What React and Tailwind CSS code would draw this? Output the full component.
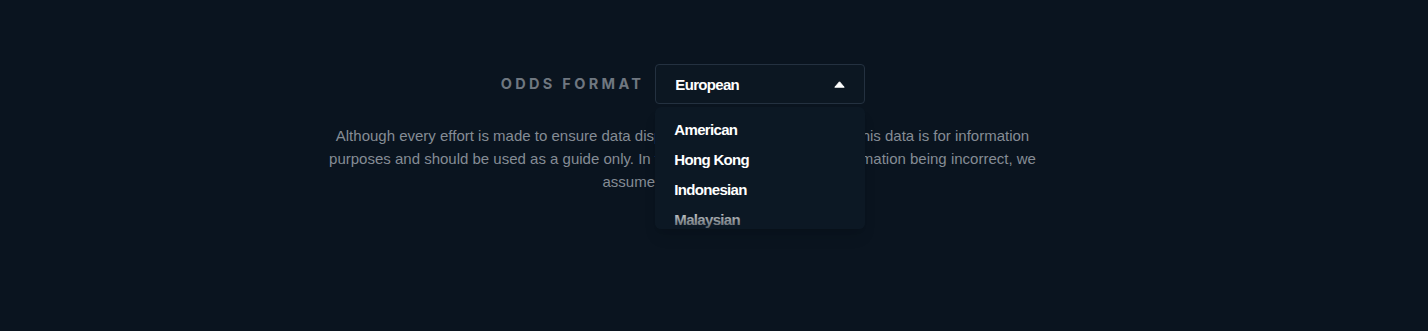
import { useState } from "react";

const options = ["American", "Hong Kong", "Indonesian", "Malaysian"];

const App = () => {
  const [selected, setSelected] = useState("European");
  const [open, setOpen] = useState(true);

  return (
    <div className="min-h-[331px] w-full bg-[#0a141f] font-['Liberation_Sans',Arial,sans-serif]">
      <div className="flex w-[1365px] flex-col items-center pt-16">
        {/* odds format row */}
        <div className="flex items-center pl-[1px]">
          <span className="mr-[11px] font-['Inter',sans-serif] text-[14.5px] font-bold tracking-[0.23em] text-[#6f7780]">
            ODDS FORMAT
          </span>
          <div className="relative">
            <button
              onClick={() => setOpen(!open)}
              className="flex h-[40px] w-[210px] items-center justify-between rounded-[4px] border border-[#243140] bg-[#0c1722] pt-[2px] pr-[19px] pl-[19px] text-left"
            >
              <span className="text-[15px] font-bold tracking-[-0.045em] text-white">
                {selected}
              </span>
              <svg width="11" height="7" viewBox="0 0 11 7" className="mb-[2px]">
                <path d="M5.5 0.8 L10.2 6.2 L0.8 6.2 Z" fill="#ffffff" stroke="#ffffff" strokeWidth="1" strokeLinejoin="round" />
              </svg>
            </button>
            {open && (
              <div className="absolute top-[43px] left-0 h-[122px] w-[210px] overflow-hidden rounded-[6px] bg-[#0c1824] shadow-lg">
                <ul className="pt-[8px] pl-[19px]">
                  {options.map((o) => (
                    <li
                      key={o}
                      onClick={() => {
                        setSelected(o);
                        setOpen(false);
                      }}
                      className="h-[30px] cursor-pointer text-[15px] leading-[30px] font-bold tracking-[-0.045em] text-white"
                    >
                      {o}
                    </li>
                  ))}
                </ul>
                <div className="absolute inset-x-0 bottom-0 h-[24px] bg-gradient-to-b from-[#0c1824]/0 to-[#0c1824]/70"></div>
              </div>
            )}
          </div>
        </div>

        {/* disclaimer */}
        <p className="mt-[20px] w-[720px] text-center text-[15px] leading-[23px] text-[#858c95]">
          Although every effort is made to ensure data displayed on our site is accurate, this data is for information
          purposes and should be used as a guide only. In the event of any particular information being incorrect, we
          assume no liability for it.
        </p>
      </div>
    </div>
  );
};

export default App;
